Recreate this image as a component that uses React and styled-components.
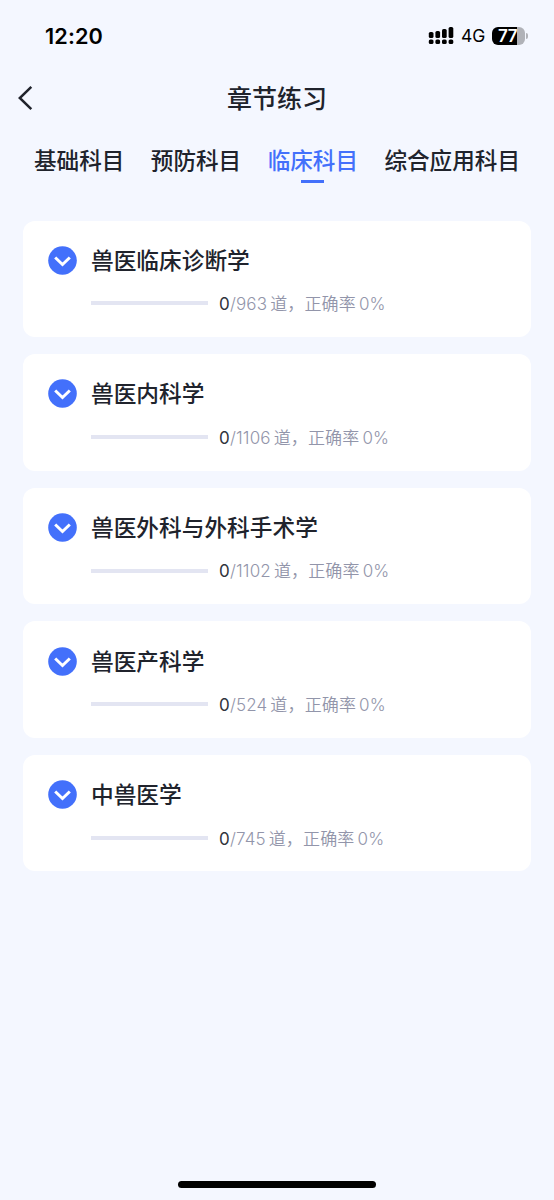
import React from 'react'
import styled, { createGlobalStyle } from 'styled-components'

const GlobalStyle = createGlobalStyle`
*{
    box-sizing: border-box;
}
body{
    margin: 0;
    background-color: #f4f7ff;
    font-family: Inter, 'Noto Sans CJK SC', sans-serif;
    color: #20232c;
}
`
const Page = styled.div`
height: 1200px;
display: flex;
flex-direction: column;
overflow: hidden;
`
const StatusBar = styled.div`
height: 71px;
padding: 0 27px 0 45px;
display: flex;
justify-content: space-between;
align-items: center;
color: #000;
`
const Time = styled.span`
font-size: 21.7px;
font-weight: 600;
letter-spacing: 0.1px;
`
const StatusIcons = styled.div`
display: flex;
align-items: center;
`
const Network = styled.span`
margin: 1px 7px 0 7px;
font-size: 17.5px;
line-height: 20px;
letter-spacing: -0.2px;
`
const Battery = styled.div`
width: 33px;
height: 18px;
border-radius: 6px;
background: linear-gradient(to right, #000 25px, #b0b2b8 25px);
color: #fff;
font-size: 17px;
font-weight: 600;
line-height: 18px;
letter-spacing: -0.5px;
padding-left: 6px;
`
const BatteryTip = styled.div`
width: 2px;
height: 6px;
margin-left: 1px;
border-radius: 0 2px 2px 0;
background-color: #b0b2b8;
margin-right: -1px;
`
const Header = styled.header`
height: 54px;
padding: 0 17px;
display: grid;
grid-template-columns: 40px 1fr 40px;
align-items: center;
h1{
    margin: 0;
    padding-top: 2px;
    text-align: center;
    font-size: 25px;
    line-height: 36px;
    font-weight: 500;
}
svg{
    display: block;
}
`
const Tabs = styled.nav`
height: 95px;
padding: 19px 34px 0 34px;
display: flex;
justify-content: space-between;
align-items: flex-start;
`
const Tab = styled.div`
display: flex;
flex-direction: column;
align-items: center;
font-size: 22.6px;
line-height: 34px;
font-weight: 500;
white-space: nowrap;
color: ${props => props.$active ? '#4370fb' : '#20232c'};
&::after{
    content: '';
    width: 23px;
    height: 3px;
    margin-top: 2px;
    background-color: ${props => props.$active ? '#4370fb' : 'transparent'};
}
`
const List = styled.main`
flex: 1;
padding: 0.5px 23px 0 23px;
display: flex;
flex-direction: column;
gap: 17px;
`
const Card = styled.section`
height: 116.6px;
padding: 22.9px 25px 0 25px;
border-radius: 12px;
background-color: #fff;
`
const CardTitle = styled.div`
display: flex;
align-items: center;
height: 34px;
svg{
    display: block;
    margin-right: 14px;
}
h2{
    margin: 0;
    padding-top: 1px;
    font-size: 22.7px;
    line-height: 34px;
    font-weight: 500;
}
`
const CardProgress = styled.div`
height: 24px;
margin: 14.1px 0 0 43px;
display: flex;
align-items: center;
`
const Track = styled.div`
width: 117px;
height: 4px;
margin-right: 11px;
background-color: #e3e5f2;
`
const Fill = styled.div`
height: 100%;
background-color: #4370fb;
`
const Stats = styled.p`
margin: 0;
padding-top: 1.4px;
display: flex;
font-size: 17px;
line-height: 24px;
font-weight: 350;
letter-spacing: 0.15px;
white-space: pre;
color: #9295aa;
b{
    font-weight: 400;
    color: #30333c;
}
i{
    font-style: normal;
    margin: 0 3px;
}
`
const HomeBar = styled.div`
width: 198px;
height: 7px;
margin: 0 auto 12px auto;
border-radius: 4px;
background-color: #000;
`

const tabs = ['基础科目', '预防科目', '临床科目', '综合应用科目']

const chapters = [
    { name: '兽医临床诊断学', done: 0, total: 963, rate: 0 },
    { name: '兽医内科学', done: 0, total: 1106, rate: 0 },
    { name: '兽医外科与外科手术学', done: 0, total: 1102, rate: 0 },
    { name: '兽医产科学', done: 0, total: 524, rate: 0 },
    { name: '中兽医学', done: 0, total: 745, rate: 0 },
]

const SignalIcon = () => (
    <svg width="26" height="19" viewBox="0 0 26 19">
        {[6, 5, 3, 1].map((top, i) => (
            <g key={top}>
                <rect x={0.8 + i * 6.6} y={top} width="4.7" height={12 - top} rx="1.6" />
                <rect x={0.8 + i * 6.6} y="13.5" width="4.7" height="4.6" rx="1.6" />
            </g>
        ))}
    </svg>
)

const BackIcon = () => (
    <svg width="18" height="26" viewBox="0 0 18 26" fill="none" stroke="#20232c" strokeWidth="2.5">
        <path d="M14.3 1.8L2.8 13L14.3 24.2" />
    </svg>
)

const ExpandIcon = () => (
    <svg width="29" height="29" viewBox="0 0 29 29" fill="none">
        <circle cx="14.5" cy="14.5" r="14.3" fill="#4370fb" />
        <path d="M7.2 11.5L14.5 18.5L21.8 11.5" stroke="#fff" strokeWidth="3" />
    </svg>
)

const Chapter = ({ name, done, total, rate }) => (
    <Card>
        <CardTitle>
            <ExpandIcon />
            <h2>{name}</h2>
        </CardTitle>
        <CardProgress>
            <Track>
                <Fill style={{ width: `${done / total * 100}%` }} />
            </Track>
            <Stats><b>{done}</b>/{total}<i>道，正确率</i>{rate}%</Stats>
        </CardProgress>
    </Card>
)

const App = () => {
    return (
        <>
            <GlobalStyle />
            <Page>
                <StatusBar>
                    <Time>12:20</Time>
                    <StatusIcons>
                        <SignalIcon />
                        <Network>4G</Network>
                        <Battery>77</Battery>
                        <BatteryTip />
                    </StatusIcons>
                </StatusBar>
                <Header>
                    <BackIcon />
                    <h1>章节练习</h1>
                </Header>
                <Tabs>
                    {tabs.map(tab => (
                        <Tab key={tab} $active={tab === '临床科目'}>{tab}</Tab>
                    ))}
                </Tabs>
                <List>
                    {chapters.map(chapter => (
                        <Chapter key={chapter.name} {...chapter} />
                    ))}
                </List>
                <HomeBar />
            </Page>
        </>
    )
}

export default App
